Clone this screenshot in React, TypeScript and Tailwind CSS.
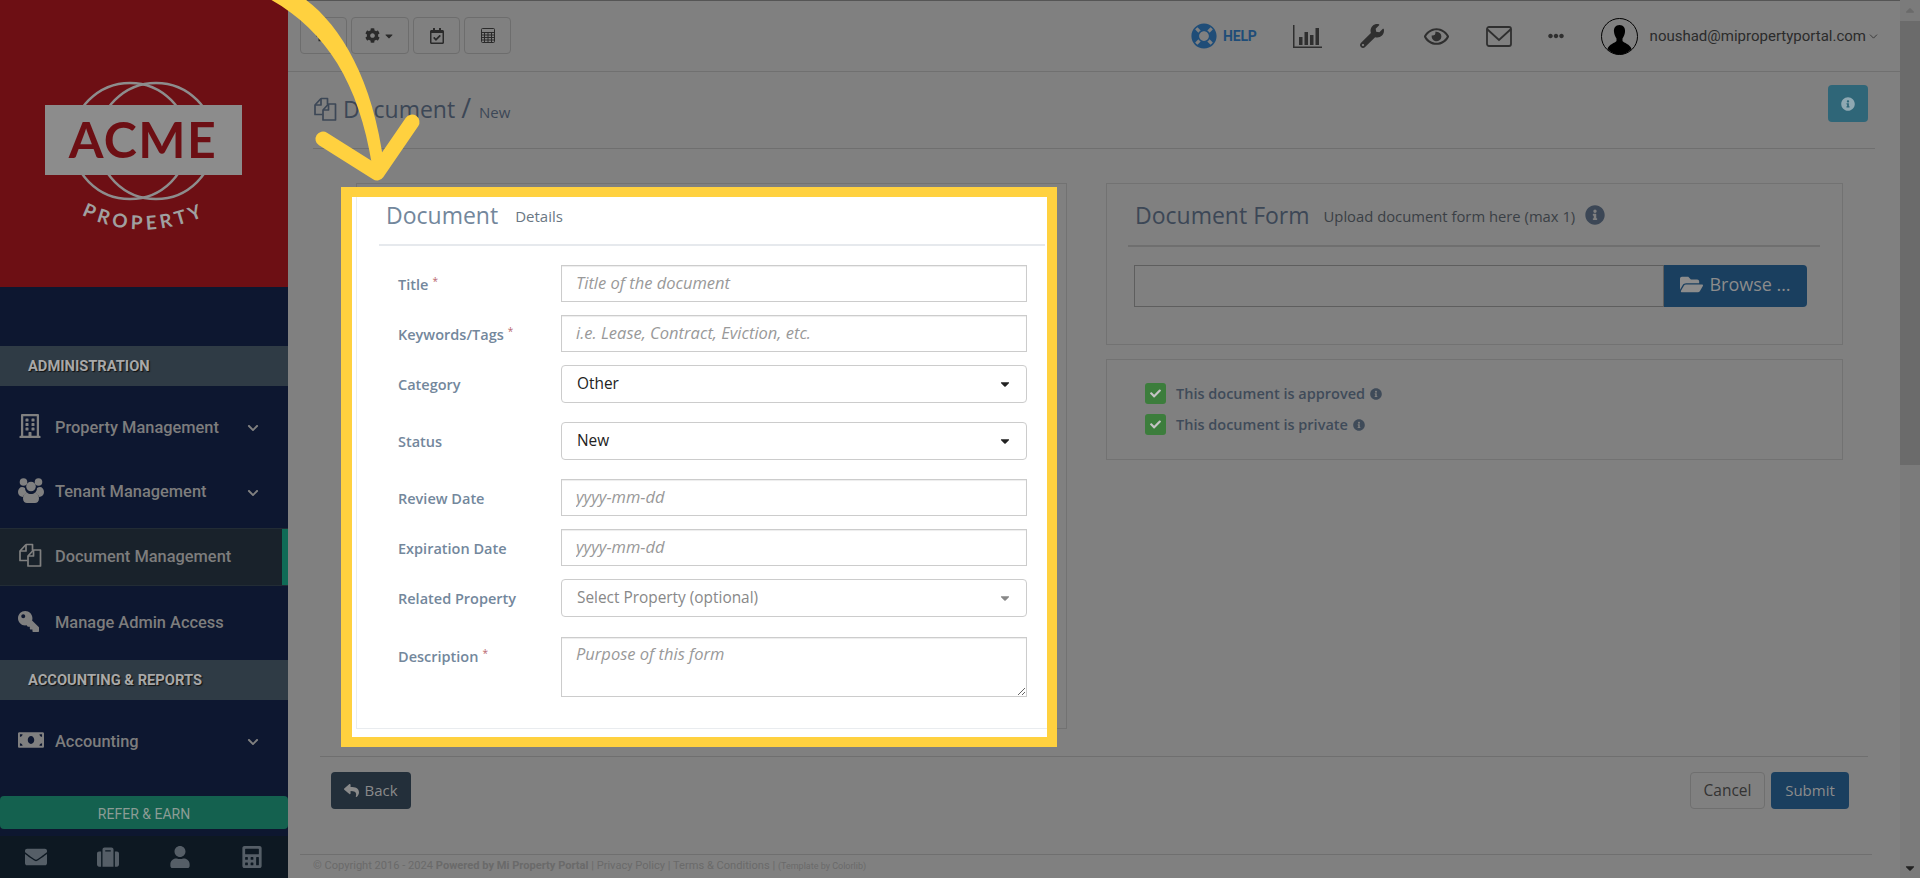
import { ReactNode } from "react";
import { ChevronDown } from "lucide-react";
import {
  FaCalculator,
  FaCaretDown,
  FaCheck,
  FaChevronDown,
  FaCog,
  FaEllipsisH,
  FaEnvelope,
  FaFolderOpen,
  FaHome,
  FaInfoCircle,
  FaKey,
  FaLifeRing,
  FaMoneyBill,
  FaRegBuilding,
  FaRegCalendarCheck,
  FaRegEye,
  FaReply,
  FaSuitcase,
  FaUser,
  FaWrench,
} from "react-icons/fa";

const roboto = "font-['Roboto','Liberation_Sans',sans-serif]";
const openSans = "font-['Open_Sans','Liberation_Sans',sans-serif]";

const FilesIcon = ({ className }: { className?: string }) => (
  <svg viewBox="0 0 24 24" fill="none" stroke="currentColor" strokeWidth="1.7" strokeLinejoin="round" className={className}>
    <path d="M8 1.5h6.5v6M8 1.5 2 8v9.5h7.5" />
    <path d="M8 1.5V8H2" />
    <path d="M15.5 7H22.5V23H10V13Z" />
    <path d="M15.5 7v6H10" />
  </svg>
);

const UsersIcon = () => (
  <svg viewBox="0 0 26 25" className="h-[25px] w-[26px]" fill="currentColor">
    <circle cx="5.500" cy="4" r="3.800" />
    <circle cx="20.500" cy="4" r="3.800" />
    <circle cx="13" cy="8.500" r="4.800" />
    <path d="M0 14c0-3 2-5 4-5 1 0 2 .5 3 1 0 2 1 3.500 2 4.500-2 1-3.500 2.500-4 4.500C2 18.500 0 17 0 14zM26 14c0-3-2-5-4-5-1 0-2 .5-3 1 0 2-1 3.500-2 4.500 2 1 3.500 2.500 4 4.500 3-.5 5-2 5-5z" />
    <path d="M9 14.500c1 1 2.500 1.500 4 1.500s3-.5 4-1.500c2.500.5 4 3 4 6 0 3-2 4.500-4 4.500H9c-2 0-4-1.500-4-4.500s1.500-5.500 4-6z" />
  </svg>
);

const ChartIcon = () => (
  <svg viewBox="0 0 29 23" className="h-[23px] w-[29px]" fill="#2f2f2f">
    <path d="M0 0h1.500v21.500H29V23H0z" />
    <rect x="6" y="12" width="3.500" height="8" />
    <rect x="11.500" y="7" width="3.500" height="13" />
    <rect x="17" y="10" width="3.500" height="10" />
    <rect x="22.500" y="3" width="3.500" height="17" />
  </svg>
);

const MailIcon = () => (
  <svg viewBox="0 0 26 21" className="h-[21px] w-[26px]" fill="none" stroke="#2f2f2f" strokeWidth="1.800">
    <rect x="1" y="1" width="24" height="19" rx="2" />
    <path d="M1 3l12 11L25 3" />
  </svg>
);

const CalcOutline = () => (
  <svg viewBox="0 0 14 15" className="h-[15px] w-[14px]" fill="none" stroke="#2a2a2a" strokeWidth="1">
    <rect x=".5" y=".5" width="13" height="14" rx="1" />
    <path d="M.5 4.500h13M.5 7h13M.5 9.500h13M.5 12h13M3.500 4.500v10M7 4.500v10M10.500 4.500v10" />
  </svg>
);

const Avatar = () => (
  <svg viewBox="0 0 37 37" className="h-[37px] w-[37px]">
    <ellipse cx="18.500" cy="18.500" rx="18" ry="18" fill="none" stroke="#000" strokeWidth="1" />
    <path
      d="M18.500 7c-4 0-6 3-5.500 7 .3 3 1.500 5 2.500 6.500v2.500c-1.500 2-7.500 3-9 8 3 3.500 7.500 5.500 12 5.500s9-2 12-5.500c-1.500-5-7.500-6-9-8v-2.500c1-1.500 2.200-3.500 2.500-6.500.5-4-1.500-7-5.500-7z"
      fill="#000"
    />
  </svg>
);

const Logo = () => (
  <svg viewBox="0 0 288 287" className="h-[287px] w-[288px]">
    <g fill="none" stroke="#8d8d8d" strokeWidth="2.500">
      <circle cx="130" cy="141" r="58" />
      <circle cx="156" cy="141" r="58" />
    </g>
    <rect x="45" y="105" width="197" height="70" fill="#8c8c8c" />
    <text x="143" y="158" textAnchor="middle" fontFamily="Lato, sans-serif" fontWeight="700" fontSize="50" letterSpacing="1.500" fill="#6d0f14">
      ACME
    </text>
    <path id="logo-curve" d="M84 216 Q143 243 204 216" fill="none" />
    <text fontFamily="Lato, sans-serif" fontWeight="700" fontSize="19" letterSpacing="4" fill="#a0a0a0">
      <textPath href="#logo-curve" startOffset="50%" textAnchor="middle">
        PROPERTY
      </textPath>
    </text>
  </svg>
);

const SideSection = ({ title }: { title: string }) => (
  <div className={`flex h-10 items-center bg-[#2f3b45] pl-[28px] text-[14.700px] font-bold text-[#a8a8a8] [text-shadow:1px_1px_1px_#111] ${roboto}`}>
    {title}
  </div>
);

const SideItem = ({ icon, label, chevron }: { icon: ReactNode; label: string; chevron?: boolean }) => (
  <div className={`flex h-full items-center ${roboto}`}>
    <span className="-mt-[4px] flex w-[55px] justify-start pl-[18px] text-[#808080]">{icon}</span>
    <span className="text-[16.400px] font-medium text-[#7d7d7d]">{label}</span>
    {chevron && <FaChevronDown className="ml-auto mr-[29px] text-[12px] text-[#808080]" />}
  </div>
);

const ToolButton = ({ children, className }: { children: ReactNode; className: string }) => (
  <div className={`flex h-[37px] items-center justify-center rounded-[4px] border border-[#6d6d6d] text-[#2a2a2a] ${className}`}>{children}</div>
);

const FieldRow = ({ label, required, top, children }: { label: string; required?: boolean; top: string; children: ReactNode }) => (
  <div className={`flex items-start ${top}`}>
    <label className={`w-[204px] pl-[41px] pt-[9px] text-[14.500px] font-semibold text-[#73879c] ${openSans}`}>
      {label}
      {required && <sup className="ml-[4px] text-[10px] font-normal text-[#b9676e]">*</sup>}
    </label>
    {children}
  </div>
);

const inputClass = `h-[37px] w-[466px] border border-[#ccc] bg-white px-[14px] pb-[2px] text-[16.500px] shadow-[inset_0_1px_1px_rgba(0,0,0,0.075)] outline-none placeholder:italic placeholder:text-[#999] ${openSans}`;

const SelectBox = ({ value, muted, height }: { value: string; muted?: boolean; height: string }) => (
  <div className={`flex w-[466px] items-center rounded-[4px] border border-[#ccc] bg-white pl-[15px] pr-[14px] text-[15.400px] ${height} ${muted ? "text-[#888]" : "text-[#222]"} ${openSans}`}>
    {value}
    <FaCaretDown className={`ml-auto text-[14px] ${muted ? "text-[#888]" : "text-[#222]"}`} />
  </div>
);

const CheckLine = ({ label, top }: { label: string; top: string }) => (
  <div className={`flex h-[21px] items-center ${top}`}>
    <span className="flex h-[21px] w-[21px] items-center justify-center rounded-[3px] bg-[#3c7d3c] text-[11px] text-[#c4c4c4]">
      <FaCheck />
    </span>
    <span className={`ml-[10px] text-[14.500px] font-semibold text-[#3f4b59] ${openSans}`}>{label}</span>
    <FaInfoCircle className="ml-[5px] text-[12px] text-[#3f4b59]" />
  </div>
);

export default function App() {
  return (
    <div className="relative flex h-[878px] w-[1920px] overflow-hidden bg-[#808080]">
      {/* sidebar */}
      <aside className="flex w-[288px] shrink-0 flex-col bg-[#0d1730]">
        <div className="h-[287px] bg-[#6d0f14]">
          <Logo />
        </div>
        <div className="h-[59px]" />
        <SideSection title="ADMINISTRATION" />
        <div className="h-[66px] pt-[18px]">
          <SideItem icon={<FaRegBuilding className="text-[24px]" />} label="Property Management" chevron />
        </div>
        <div className="h-[76px] pt-[5px]">
          <SideItem icon={<UsersIcon />} label="Tenant Management" chevron />
        </div>
        <div className="relative h-[58px] border-y border-[#222c35] bg-[#19222b]">
          <SideItem icon={<FilesIcon className="h-[24px] w-[24px]" />} label="Document Management" />
          <div className="absolute bottom-0 right-0 top-0 w-[6px] bg-[#0f6b56]" />
        </div>
        <div className="h-[74px]">
          <SideItem icon={<FaKey className="-scale-x-100 text-[21px]" />} label="Manage Admin Access" />
        </div>
        <SideSection title="ACCOUNTING & REPORTS" />
        <div className="h-[84px]">
          <SideItem icon={<FaMoneyBill className="text-[26px]" />} label="Accounting" chevron />
        </div>
        <div className="h-[12px]" />
        <div className={`flex h-[33px] items-center justify-center rounded-[4px] bg-[#14614f] pt-[4px] text-[14px] text-[#8b9c95] ${roboto}`}>
          REFER &amp; EARN
        </div>
        <div className="mt-[7px] flex flex-1 items-center gap-[50px] bg-[#0d1822] pl-[25px] text-[#555e67]">
          <FaEnvelope className="text-[22px]" />
          <FaSuitcase className="text-[22px]" />
          <FaUser className="text-[22px]" />
          <FaCalculator className="text-[22px]" />
        </div>
      </aside>

      {/* main page */}
      <main className="flex w-[1612px] shrink-0 flex-col">
        <header className="flex h-[72px] items-center border-b border-t border-b-[#707070] border-t-[#555]">
          <div className="-mt-[1px] ml-[12px] flex gap-[4px]">
            <ToolButton className="w-[47px]">
              <FaHome className="text-[15px]" />
            </ToolButton>
            <ToolButton className="w-[58px] gap-[3px]">
              <FaCog className="text-[15px]" />
              <FaCaretDown className="text-[12px]" />
            </ToolButton>
            <ToolButton className="w-[47px]">
              <FaRegCalendarCheck className="text-[16px]" />
            </ToolButton>
            <ToolButton className="w-[47px]">
              <CalcOutline />
            </ToolButton>
          </div>
          <div className="ml-auto flex items-center pr-[20px]">
            <FaLifeRing className="text-[26px] text-[#1f4d78]" />
            <span className={`ml-[6px] text-[14px] font-bold tracking-[-0.2px] text-[#1f4d78] ${roboto}`}>HELP</span>
            <span className="ml-[36px]">
              <ChartIcon />
            </span>
            <FaWrench className="ml-[38px] text-[24px] text-[#2f2f2f]" />
            <FaRegEye className="ml-[40px] text-[25px] text-[#2f2f2f]" />
            <span className="ml-[37px]">
              <MailIcon />
            </span>
            <FaEllipsisH className="ml-[36px] text-[16px] text-[#2f2f2f]" />
            <span className="ml-[37px]">
              <Avatar />
            </span>
            <span className={`ml-[12px] text-[15px] text-[#2b2b2b] ${roboto}`}>noushad@mipropertyportal.com</span>
            <ChevronDown size={13} strokeWidth={1.500} className="ml-[1px] text-[#2b2b2b]" />
          </div>
        </header>

        <div className="mx-[25px] flex h-[77px] items-center border-b border-[#6f6f6f] pb-[3px] pr-[7px]">
          <FilesIcon className="h-[24px] w-[24px] text-[#3c4756]" />
          <h1 className={`ml-[6px] text-[23px] text-[#3c4756] ${openSans}`}>
            Document <span className="text-[27px]">/</span> <small className="ml-[2px] text-[15px]">New</small>
          </h1>
          <div className="ml-auto flex h-[37px] w-[40px] -translate-y-[5px] items-center justify-center rounded-[4px] bg-[#2f6678] text-[14px] text-[#8fa8b2]">
            <FaInfoCircle />
          </div>
        </div>

        <div className="flex items-start pl-[68px] pt-[34px]">
          {/* form panel, highlighted by the tour overlay */}
          <section className="relative h-[546px] w-[711px] border border-[#727272]">
            <div className="absolute -left-[16px] top-[3px] h-[560px] w-[716px] border-y-[10px] border-l-[11px] border-r-[10px] border-[#ffd13f] bg-white">
              <div className="ml-[4px] h-[532px] border-b border-l border-[#e9ecef]" />
            </div>
            <div className="relative">
              <div className={`ml-[29px] flex h-[60px] items-center pt-[2px] text-[#73879c] ${openSans}`}>
                <span className="text-[23px]">Document</span>
                <span className="ml-[17px] pt-[3px] text-[15px] text-[#6a7784]">Details</span>
              </div>
              <div className="ml-[22px] h-[2px] w-[666px] bg-[#e6e9ed]" />
              <FieldRow label="Title" required top="mt-[19px]">
                <input className={inputClass} placeholder="Title of the document" />
              </FieldRow>
              <FieldRow label="Keywords/Tags" required top="mt-[13px]">
                <input className={inputClass} placeholder="i.e. Lease, Contract, Eviction, etc." />
              </FieldRow>
              <FieldRow label="Category" top="mt-[13px]">
                <SelectBox value="Other" height="h-[38px]" />
              </FieldRow>
              <FieldRow label="Status" top="mt-[19px]">
                <SelectBox value="New" height="h-[38px]" />
              </FieldRow>
              <FieldRow label="Review Date" top="mt-[19px]">
                <input className={inputClass} placeholder="yyyy-mm-dd" />
              </FieldRow>
              <FieldRow label="Expiration Date" top="mt-[13px]">
                <input className={inputClass} placeholder="yyyy-mm-dd" />
              </FieldRow>
              <FieldRow label="Related Property" top="mt-[13px]">
                <SelectBox value="Select Property (optional)" muted height="h-[38px]" />
              </FieldRow>
              <FieldRow label="Description" required top="mt-[20px]">
                <textarea className={`${inputClass} !h-[60px] resize-y py-[4px]`} placeholder="Purpose of this form" />
              </FieldRow>
            </div>
          </section>

          <div className="ml-[39px] w-[737px]">
            <section className="h-[162px] border border-[#727272]">
              <div className={`ml-[28px] flex h-[61px] items-center pt-[1px] text-[#3c4756] ${openSans}`}>
                <span className="text-[23px]">Document Form</span>
                <span className="ml-[14px] pt-[3px] text-[14.800px] text-[#3a3f45]">Upload document form here (max 1)</span>
                <FaInfoCircle className="ml-[10px] text-[20px]" />
              </div>
              <div className="ml-[21px] h-[2px] w-[692px] bg-[#6f6f6f]" />
              <div className="ml-[27px] mt-[18px] flex h-[42px] w-[673px]">
                <div className="w-[530px] border border-[#5e5e5e]" />
                <div className={`flex flex-1 items-center justify-center gap-[6px] rounded-r-[4px] bg-[#1a3f5f] pb-[3px] text-[18px] text-[#8c8c8c] ${openSans}`}>
                  <FaFolderOpen className="text-[23px]" /> Browse …
                </div>
              </div>
            </section>
            <section className="mt-[14px] h-[101px] border border-[#727272] pl-[38px] pt-[23px]">
              <CheckLine label="This document is approved" top="" />
              <CheckLine label="This document is private" top="mt-[10px]" />
            </section>
          </div>
        </div>

        <div className="ml-[32px] mr-[32px] mt-[27px] border-t border-[#6f6f6f]" />
        <div className="ml-[43px] mr-[51px] mt-[15px] flex h-[37px]">
          <div className={`flex w-[80px] items-center justify-center gap-[5px] rounded-[4px] bg-[#232f3a] text-[15px] text-[#8a8a8a] ${openSans}`}>
            <FaReply className="text-[15px]" /> Back
          </div>
          <div className={`ml-auto flex w-[75px] items-center justify-center rounded-[4px] border border-[#6f6f6f] text-[15.500px] text-[#333] ${openSans}`}>
            Cancel
          </div>
          <div className={`ml-[6px] flex w-[78px] items-center justify-center rounded-[4px] bg-[#1a3f5f] text-[15px] text-[#8c8c8c] ${openSans}`}>
            Submit
          </div>
        </div>
        <div className="ml-[12px] mr-[28px] mt-[45px] border-t border-[#6f6f6f]" />
        <p className={`ml-[25px] mt-[3px] text-[11.100px] text-[#6a6a6a] ${roboto}`}>
          © Copyright 2016 - 2024 <b>Powered by Mi Property Portal</b> | Privacy Policy | Terms &amp; Conditions |{" "}
          <span className="text-[9px]">(Template by Colorlib)</span>
        </p>
      </main>

      {/* scrollbar */}
      <div className="flex w-[20px] shrink-0 flex-col items-center bg-[#7b7b7b]">
        <div className="flex h-[21px] items-center text-[#6a6a6a]">
          <FaCaretDown className="rotate-180 text-[14px]" />
        </div>
        <div className="h-[444px] w-full bg-[#6b6b6b]" />
        <div className="mt-auto flex h-[21px] items-center text-[#222]">
          <FaCaretDown className="text-[14px]" />
        </div>
      </div>

      {/* tour arrow */}
      <svg className="pointer-events-none absolute left-0 top-0 h-[878px] w-[1920px]" viewBox="0 0 1920 878" fill="none" stroke="#ffd13f" strokeLinecap="round" strokeLinejoin="round">
        <path d="M256 -8C320 22 358 76 372 165L384 165C372 70 333 14 294 -8Z" fill="#ffd13f" stroke="none" />
        <path d="M323 139 377 173 412 122" strokeWidth="15" />
      </svg>
    </div>
  );
}
